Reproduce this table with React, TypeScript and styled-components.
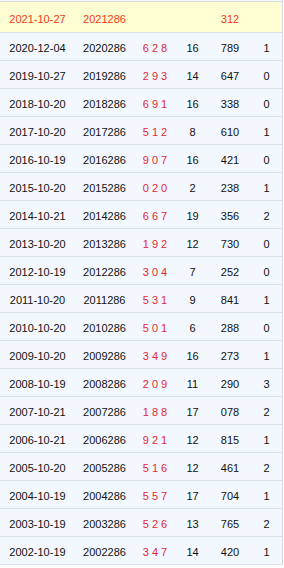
import React from "react";
import styled, { createGlobalStyle } from "styled-components";

const GlobalStyle = createGlobalStyle`
  html, body {
    margin: 0;
    padding: 0;
    background: #fff;
  }
  body {
    font-family: "Liberation Sans", Arial, sans-serif;
  }
`;

type RowData = {
  date: string;
  issue: string;
  nums: string;
  sum: string;
  code: string;
  odd: string;
};

const rows: RowData[] = [
  { date: "2020-12-04", issue: "2020286", nums: "6 2 8", sum: "16", code: "789", odd: "1" },
  { date: "2019-10-27", issue: "2019286", nums: "2 9 3", sum: "14", code: "647", odd: "0" },
  { date: "2018-10-20", issue: "2018286", nums: "6 9 1", sum: "16", code: "338", odd: "0" },
  { date: "2017-10-20", issue: "2017286", nums: "5 1 2", sum: "8", code: "610", odd: "1" },
  { date: "2016-10-19", issue: "2016286", nums: "9 0 7", sum: "16", code: "421", odd: "0" },
  { date: "2015-10-20", issue: "2015286", nums: "0 2 0", sum: "2", code: "238", odd: "1" },
  { date: "2014-10-21", issue: "2014286", nums: "6 6 7", sum: "19", code: "356", odd: "2" },
  { date: "2013-10-20", issue: "2013286", nums: "1 9 2", sum: "12", code: "730", odd: "0" },
  { date: "2012-10-19", issue: "2012286", nums: "3 0 4", sum: "7", code: "252", odd: "0" },
  { date: "2011-10-20", issue: "2011286", nums: "5 3 1", sum: "9", code: "841", odd: "1" },
  { date: "2010-10-20", issue: "2010286", nums: "5 0 1", sum: "6", code: "288", odd: "0" },
  { date: "2009-10-20", issue: "2009286", nums: "3 4 9", sum: "16", code: "273", odd: "1" },
  { date: "2008-10-19", issue: "2008286", nums: "2 0 9", sum: "11", code: "290", odd: "3" },
  { date: "2007-10-21", issue: "2007286", nums: "1 8 8", sum: "17", code: "078", odd: "2" },
  { date: "2006-10-21", issue: "2006286", nums: "9 2 1", sum: "12", code: "815", odd: "1" },
  { date: "2005-10-20", issue: "2005286", nums: "5 1 6", sum: "12", code: "461", odd: "2" },
  { date: "2004-10-19", issue: "2004286", nums: "5 5 7", sum: "17", code: "704", odd: "1" },
  { date: "2003-10-19", issue: "2003286", nums: "5 2 6", sum: "13", code: "765", odd: "2" },
  { date: "2002-10-19", issue: "2002286", nums: "3 4 7", sum: "14", code: "420", odd: "1" },
];

const Table = styled.div`
  width: 283px;
  display: flex;
  flex-direction: column;
  background: #f3f8fe;
  border-right: 1px solid #d5dce6;
  padding-top: 1px;
  box-sizing: border-box;
`;

const Row = styled.div<{ $current?: boolean }>`
  display: grid;
  grid-template-columns: 75px 59px 42px 33px 42px 31px;
  height: ${(p) => (p.$current ? "32px" : "28px")};
  box-sizing: border-box;
  border-top: ${(p) => (p.$current ? "1px solid #d5dce6" : "none")};
  border-bottom: 1px solid #d9e0e9;
  background: ${(p) => (p.$current ? "#fffdd2" : "#f3f8fe")};
  padding-top: ${(p) => (p.$current ? "4px" : "2px")};
  align-items: center;
  font-size: 11px;
  color: ${(p) => (p.$current ? "#f23c1a" : "#111")};
`;

const Cell = styled.div<{ $red?: boolean }>`
  text-align: center;
  white-space: pre;
  color: ${(p) => (p.$red ? "#e22834" : "inherit")};
`;

export default function App() {
  return (
    <>
      <GlobalStyle />
      <Table>
        <Row $current>
          <Cell>2021-10-27</Cell>
          <Cell>2021286</Cell>
          <Cell />
          <Cell />
          <Cell>312</Cell>
          <Cell />
        </Row>
        {rows.map((r) => (
          <Row key={r.issue}>
            <Cell>{r.date}</Cell>
            <Cell>{r.issue}</Cell>
            <Cell $red>{r.nums}</Cell>
            <Cell>{r.sum}</Cell>
            <Cell>{r.code}</Cell>
            <Cell>{r.odd}</Cell>
          </Row>
        ))}
      </Table>
    </>
  );
}
